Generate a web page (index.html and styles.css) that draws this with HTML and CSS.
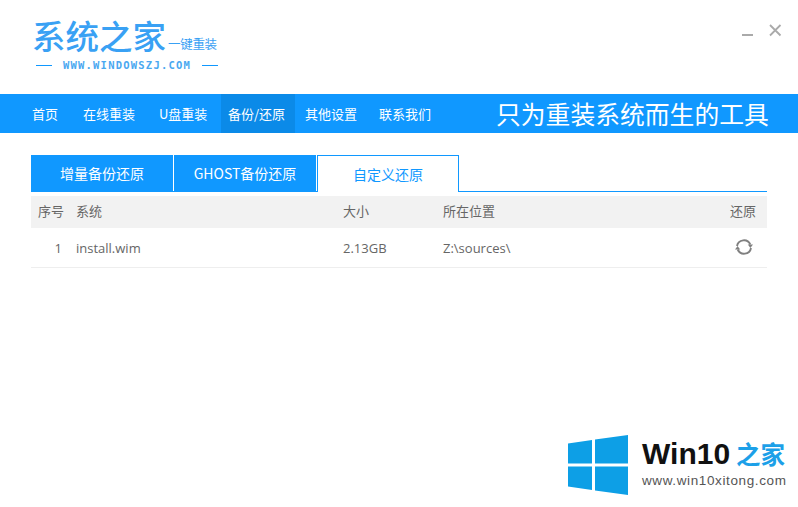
FILE: index.html
```html
<!DOCTYPE html>
<html lang="zh">
<head>
<meta charset="utf-8">
<title>系统之家一键重装</title>
<link rel="stylesheet" href="styles.css">
</head>
<body>
<div class="app">
  <header class="top">
    <div class="logo">
      <div class="logo-main"><span class="logo-name">系统之家</span><span class="logo-sub">一键重装</span></div>
      <div class="logo-url"><i class="dash"></i><span>WWW.WINDOWSZJ.COM</span><i class="dash"></i></div>
    </div>
    <div class="win-controls">
      <svg class="win-min" width="12" height="12" viewBox="0 0 12 12"><rect x="0" y="9" width="11" height="2" fill="#aaa"/></svg>
      <svg class="win-close" width="14" height="14" viewBox="0 0 14 14"><path d="M2 2l10.500 10.500M12.500 2L2 12.500" stroke="#aaa" stroke-width="1.800" fill="none"/></svg>
    </div>
  </header>
  <nav class="nav">
    <a class="nav-item nav-first">首页</a>
    <a class="nav-item nav-online">在线重装</a>
    <a class="nav-item nav-usb">U盘重装</a>
    <a class="nav-item nav-active">备份/还原</a>
    <a class="nav-item nav-other">其他设置</a>
    <a class="nav-item nav-contact">联系我们</a>
    <span class="slogan">只为重装系统而生的工具</span>
  </nav>
  <main class="content">
    <div class="tabs">
      <a class="tab">增量备份还原</a>
      <a class="tab">GHOST备份还原</a>
      <a class="tab tab-active">自定义还原</a>
    </div>
    <div class="row row-head">
      <span class="c-no">序号</span><span class="c-sys">系统</span><span class="c-size">大小</span><span class="c-path">所在位置</span><span class="c-act">还原</span>
    </div>
    <div class="row row-body">
      <span class="c-no c-num">1</span><span class="c-sys">install.wim</span><span class="c-size">2.13GB</span><span class="c-path">Z:\sources\</span>
      <span class="c-act">
        <svg class="restore" width="18" height="18" viewBox="0 0 18 18" fill="none" stroke="#808080" stroke-width="1.900">
          <path d="M2 8a7 7 0 0 1 13.300-1.500"/>
          <path d="M16 10a7 7 0 0 1-13.300 1.500"/>
          <path d="M12.800 6.500h5.200l-2.600 3.400z" fill="#808080" stroke="none"/>
          <path d="M5.200 11.500H0l2.600-3.400z" fill="#808080" stroke="none"/>
        </svg>
      </span>
    </div>
  </main>
  <aside class="watermark">
    <svg class="wm-logo" width="60" height="60" viewBox="0 0 60 60">
      <path fill="#0d9fe6" d="M0 8.500l24-3.500v23.500H0zM27 4.500L60 0v28.500H27zM0 31.500h24v23.500L0 51.500zM27 31.500h33V60l-33-4.500z"/>
    </svg>
    <div class="wm-text">
      <div class="wm-title"><span class="wm-win">Win10</span><span class="wm-zh">之家</span></div>
      <div class="wm-url">www.win10xitong.com</div>
    </div>
  </aside>
</div>
</body>
</html>
```
FILE: styles.css
```css
* { box-sizing: border-box; }
html, body { margin: 0; padding: 0; background: #fff; }
body { font-family: "Noto Sans CJK SC", "Liberation Sans", sans-serif; }
.app { position: relative; width: 798px; height: 507px; overflow: hidden; }
.top { height: 94px; display: flex; justify-content: space-between; padding: 17px 0 0 32px; }
.logo { width: 187px; color: #39a1f4; }
.logo-main { display: flex; align-items: flex-end; height: 36px; }
.logo-name { font-size: 33.500px; line-height: 36px; white-space: nowrap; font-weight: 500; width: 136px; }
.logo-sub { font-size: 12.500px; line-height: 14px; letter-spacing: -.3px; margin: 0 0 2px 0; white-space: nowrap; }
.logo-url { display: flex; align-items: center; justify-content: space-between; margin: 6px 0 0 4px; height: 12px; width: 182px; }
.logo-url span { font-family: "DejaVu Sans Mono", monospace; font-size: 10.500px; letter-spacing: 1.220px; font-weight: 700; line-height: 12px; color: #4aa8f0; }
.dash { display: block; width: 16px; height: 1px; background: #1098ff; }
.win-controls { display: flex; align-items: flex-start; gap: 14px; padding: 6px 16px 0 0; }
.win-min { display: block; margin-top: 2px; }
.win-close { display: block; }
.nav { height: 39px; background: #1098ff; display: flex; align-items: stretch; color: #fff; font-size: 13px; }
.nav-item { display: flex; align-items: center; height: 39px; white-space: nowrap; }
.nav-first { margin-left: 32px; width: 51px; }
.nav-online { width: 76px; }
.nav-usb { width: 62px; }
.nav-active { width: 74px; padding-left: 7px; background: #0b8ae8; }
.nav-other { width: 84px; padding-left: 10px; }
.nav-contact { width: 117px; }
.slogan { font-size: 24.800px; line-height: 39px; white-space: nowrap; }
.content { padding: 22px 31px 0; }
.tabs { display: flex; gap: 1px; height: 37px; border-bottom: 1px solid #1098ff; }
.tab { width: 142px; height: 36px; background: #1098ff; color: #fff; font-size: 14px; display: flex; align-items: center; justify-content: center; }
.tab-active { height: 37px; background: #fff; color: #1098ff; border: 1px solid #1098ff; border-bottom: 0; }
.row { display: flex; align-items: center; width: 736px; color: #666; font-size: 13px; }
.row-head { height: 32px; margin-top: 4px; padding-bottom: 3px; background: #f2f2f2; }
.row-body { height: 40px; border-bottom: 1px solid #eee; font-family: "Open Sans", "Noto Sans CJK SC", sans-serif; }
.c-no { width: 45px; padding-left: 7px; }
.c-num { padding: 0 14px 0 0; text-align: right; width: 45px; }
.c-sys { width: 267px; }
.c-size { width: 100px; }
.c-path { flex: 1; }
.c-act { width: 37px; display: flex; align-items: center; white-space: nowrap; }
.restore { display: block; margin: -2px 0 0 5px; }
.watermark { position: absolute; left: 568px; top: 435px; display: flex; gap: 14px; }
.wm-logo { display: block; }
.wm-title { display: flex; align-items: center; height: 38px; }
.wm-win { font-family: "Liberation Sans", sans-serif; font-weight: 700; font-size: 30px; color: #111; line-height: 38px; }
.wm-zh { font-size: 24.500px; font-weight: 700; color: #1ca0e8; margin-left: 6px; line-height: 38px; }
.wm-url { font-family: "Liberation Sans", sans-serif; font-size: 13.500px; color: #555; line-height: 16px; letter-spacing: .62px; white-space: nowrap; }
```
